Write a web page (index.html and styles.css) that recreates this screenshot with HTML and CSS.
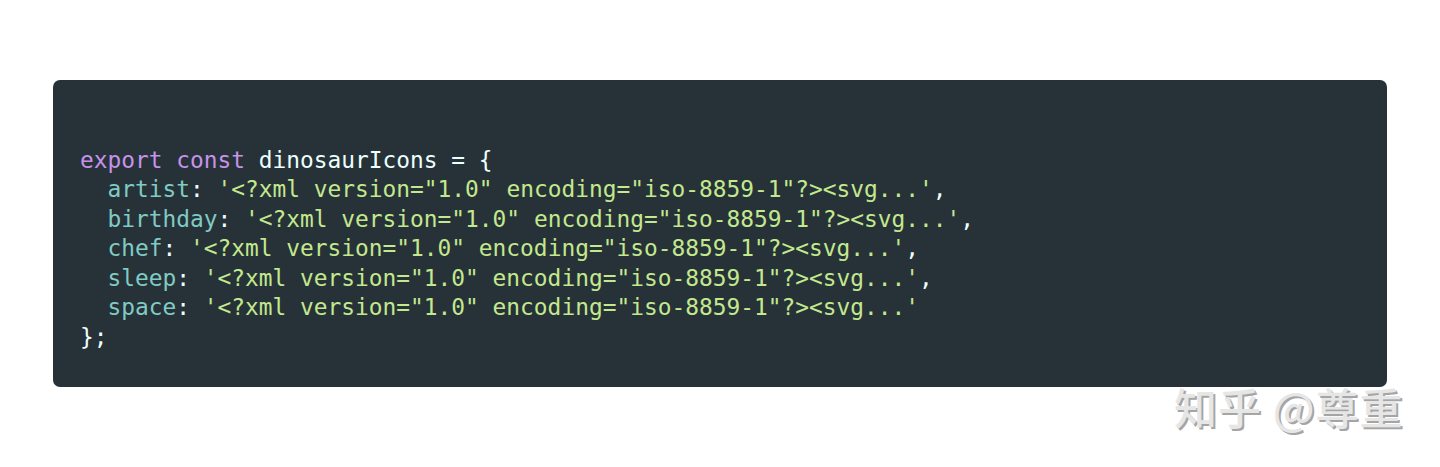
FILE: index.html
```html
<!DOCTYPE html>
<html lang="en">
<head>
<meta charset="utf-8">
<title>dinosaurIcons</title>
<link rel="stylesheet" href="styles.css">
</head>
<body>
<div class="page">
<pre class="code"><code><span class="line"> </span>
<span class="line"><span class="kw">export</span> <span class="kw">const</span> dinosaurIcons = {</span>
<span class="line">  <span class="prop">artist</span>: <span class="str">'&lt;?xml version="1.0" encoding="iso-8859-1"?&gt;&lt;svg...'</span>,</span>
<span class="line">  <span class="prop">birthday</span>: <span class="str">'&lt;?xml version="1.0" encoding="iso-8859-1"?&gt;&lt;svg...'</span>,</span>
<span class="line">  <span class="prop">chef</span>: <span class="str">'&lt;?xml version="1.0" encoding="iso-8859-1"?&gt;&lt;svg...'</span>,</span>
<span class="line">  <span class="prop">sleep</span>: <span class="str">'&lt;?xml version="1.0" encoding="iso-8859-1"?&gt;&lt;svg...'</span>,</span>
<span class="line">  <span class="prop">space</span>: <span class="str">'&lt;?xml version="1.0" encoding="iso-8859-1"?&gt;&lt;svg...'</span></span>
<span class="line">};</span></code></pre>
<div class="watermark">知乎 @尊重</div>
</div>
</body>
</html>
```
FILE: styles.css
```css
html, body {
  margin: 0;
  padding: 0;
  background: #ffffff;
}
.page {
  position: relative;
  width: 1440px;
  height: 467px;
  padding: 80px 53px 0 53px;
  box-sizing: border-box;
}
.code {
  margin: 0;
  background: #263238;
  border-radius: 7px;
  height: 307px;
  box-sizing: border-box;
  padding: 36px 27px 0 27px;
  font-family: "DejaVu Sans Mono", monospace;
  font-size: 22.85px;
  line-height: 29.5px;
  color: #eeffff;
}
.code code {
  font-family: inherit;
}
.kw { color: #c792ea; }
.prop { color: #80cbc4; }
.str { color: #c3e88d; }
.watermark {
  position: absolute;
  left: 1174px;
  top: 380px;
  font-family: "Noto Sans CJK SC", sans-serif;
  font-size: 43px;
  line-height: 52px;
  font-weight: 500;
  color: #e6e6e6;
  text-shadow: 2px 2px 0 #a5a5a5, -1px -1px 0 #ffffff;
  letter-spacing: 1px;
}
```
